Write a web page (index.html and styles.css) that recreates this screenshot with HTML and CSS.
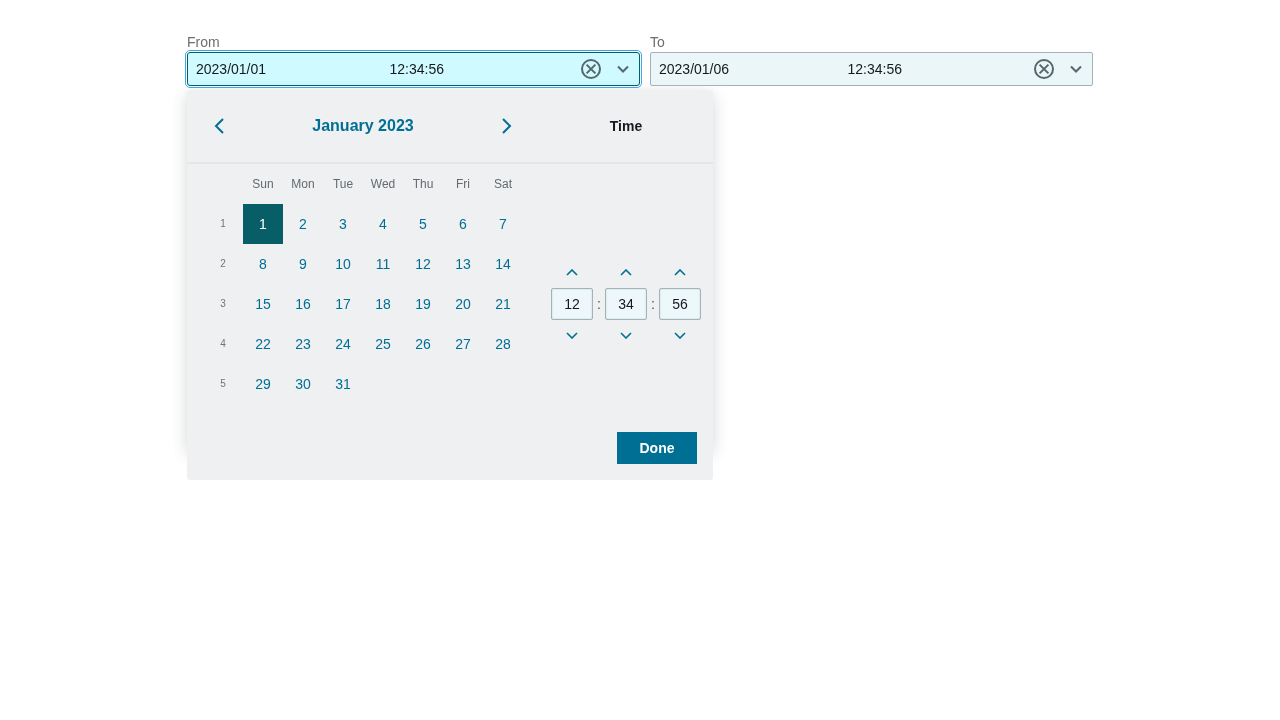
FILE: index.html
```html
<!DOCTYPE html>
<html lang="en">
<head>
    <meta charset="UTF-8">
    <title>Date time range</title>
    <link rel="stylesheet" href="styles.css">
</head>
<body>
    <div class="range">
        <div class="field field-from">
            <label class="field-label">From</label>
            <div class="picker picker-focus">
                <span class="picker-date">2023/01/01</span>
                <span class="picker-time">12:34:56</span>
                <svg class="icon-clear" width="22" height="22" viewBox="0 0 22 22"><circle cx="11" cy="11" r="9"/><path d="M6.6 6.6l8.8 8.8M15.4 6.6l-8.8 8.8"/></svg>
                <svg class="icon-caret" width="14" height="8" viewBox="0 0 14 8"><path d="M2 1.5l5 5 5-5"/></svg>
            </div>

            <div class="sheet">
                <div class="sheet-inner">
                    <div class="sheet-main">
                        <div class="calendar">
                            <div class="cal-head">
                                <svg class="nav" width="12" height="18" viewBox="0 0 12 18"><path d="M10 2L3 9l7 7"/></svg>
                                <span class="cal-month">January 2023</span>
                                <svg class="nav" width="12" height="18" viewBox="0 0 12 18"><path d="M2 2l7 7-7 7"/></svg>
                            </div>
                            <div class="cal-grid">
                                <span></span><span class="dow">Sun</span><span class="dow">Mon</span><span class="dow">Tue</span><span class="dow">Wed</span><span class="dow">Thu</span><span class="dow">Fri</span><span class="dow">Sat</span>
                                <span class="wk">1</span><span class="day day-on">1</span><span class="day">2</span><span class="day">3</span><span class="day">4</span><span class="day">5</span><span class="day">6</span><span class="day">7</span>
                                <span class="wk">2</span><span class="day">8</span><span class="day">9</span><span class="day">10</span><span class="day">11</span><span class="day">12</span><span class="day">13</span><span class="day">14</span>
                                <span class="wk">3</span><span class="day">15</span><span class="day">16</span><span class="day">17</span><span class="day">18</span><span class="day">19</span><span class="day">20</span><span class="day">21</span>
                                <span class="wk">4</span><span class="day">22</span><span class="day">23</span><span class="day">24</span><span class="day">25</span><span class="day">26</span><span class="day">27</span><span class="day">28</span>
                                <span class="wk">5</span><span class="day">29</span><span class="day">30</span><span class="day">31</span>
                            </div>
                        </div>
                        <div class="clock">
                            <div class="clock-head">Time</div>
                            <div class="clock-body">
                                <div class="spin">
                                    <svg class="chev" width="12" height="7" viewBox="0 0 12 7"><path d="M1 6l5-5 5 5"/></svg>
                                    <div class="spin-box">12</div>
                                    <svg class="chev" width="12" height="7" viewBox="0 0 12 7"><path d="M1 1l5 5 5-5"/></svg>
                                </div>
                                <span class="colon">:</span>
                                <div class="spin">
                                    <svg class="chev" width="12" height="7" viewBox="0 0 12 7"><path d="M1 6l5-5 5 5"/></svg>
                                    <div class="spin-box">34</div>
                                    <svg class="chev" width="12" height="7" viewBox="0 0 12 7"><path d="M1 1l5 5 5-5"/></svg>
                                </div>
                                <span class="colon">:</span>
                                <div class="spin">
                                    <svg class="chev" width="12" height="7" viewBox="0 0 12 7"><path d="M1 6l5-5 5 5"/></svg>
                                    <div class="spin-box">56</div>
                                    <svg class="chev" width="12" height="7" viewBox="0 0 12 7"><path d="M1 1l5 5 5-5"/></svg>
                                </div>
                            </div>
                        </div>
                    </div>
                    <div class="sheet-foot">
                        <button class="done">Done</button>
                    </div>
                </div>
            </div>
        </div>

        <div class="field field-to">
            <label class="field-label">To</label>
            <div class="picker">
                <span class="picker-date">2023/01/06</span>
                <span class="picker-time">12:34:56</span>
                <svg class="icon-clear" width="22" height="22" viewBox="0 0 22 22"><circle cx="11" cy="11" r="9"/><path d="M6.6 6.6l8.8 8.8M15.4 6.6l-8.8 8.8"/></svg>
                <svg class="icon-caret" width="14" height="8" viewBox="0 0 14 8"><path d="M2 1.5l5 5 5-5"/></svg>
            </div>
        </div>
    </div>
</body>
</html>
```

FILE: styles.css
```css
html, body {
    height: 100%;
}
body {
    font-family: "Liberation Sans", Arial, sans-serif;
    font-size: 14px;
    margin: 0;
    padding: 34px 187px 0;
    box-sizing: border-box;
    background-color: #fff;
    color: #15191e;
}
svg {
    fill: none;
    display: block;
}
.range {
    display: flex;
    align-items: flex-start;
    gap: 10px;
    will-change: transform;
}
.field-from {
    width: 453px;
}
.field-to {
    width: 443px;
}
.field-label {
    display: block;
    height: 18px;
    line-height: 16px;
    color: #6e6e6e;
}
.picker {
    height: 34px;
    box-sizing: border-box;
    display: flex;
    align-items: center;
    padding: 0 9px 0 8px;
    border: 1px solid #a2b3b9;
    border-radius: 2px;
    background-color: #eaf6f8;
}
.picker-focus {
    border-color: #055f68;
    background-color: #cffaff;
    outline: 1px solid #3aa9ee;
    outline-offset: 1px;
    border-radius: 3px;
}
.picker-date {
    width: 193.5px;
}
.field-to .picker-date {
    width: 188.5px;
}
.icon-clear {
    stroke: #55666c;
    stroke-width: 2;
    margin-left: auto;
    margin-right: 14px;
}
.icon-caret {
    stroke: #55666c;
    stroke-width: 2;
}
.sheet {
    margin-top: 4px;
    width: 526px;
    height: 360px;
    border-radius: 3px;
    box-shadow: 0 4px 16px rgba(40, 50, 60, 0.2);
}
.sheet-inner {
    height: 390px;
    background-color: #eef0f2;
    border-radius: 3px;
}
.sheet-main {
    display: flex;
    height: 342px;
}
.calendar {
    width: 352px;
}
.cal-head {
    height: 72px;
    display: flex;
    align-items: center;
    justify-content: space-between;
    padding-left: 26px;
    width: 300px;
}
.nav {
    stroke: #006f94;
    stroke-width: 2;
}
.cal-month {
    font-size: 16px;
    font-weight: bold;
    color: #006f94;
}
.cal-grid {
    display: grid;
    grid-template-columns: 56px repeat(7, 40px);
    grid-template-rows: 40px repeat(5, 40px);
    border-top: 2px solid #e3e5e8;
    width: 526px;
}
.dow {
    font-size: 12px;
    color: #656a6f;
    text-align: center;
    line-height: 40px;
}
.wk {
    font-size: 10px;
    color: #6f7479;
    text-align: center;
    line-height: 40px;
    padding-left: 16px;
    width: 40px;
}
.day {
    color: #006f94;
    text-align: center;
    line-height: 40px;
}
.day-on {
    background-color: #075e67;
    color: #fff;
}
.clock {
    width: 174px;
}
.clock-head {
    height: 72px;
    line-height: 72px;
    text-align: center;
    font-weight: bold;
}
.clock-body {
    display: flex;
    justify-content: center;
    align-items: center;
    margin-top: 107px;
}
.spin {
    width: 42px;
    display: flex;
    flex-direction: column;
    align-items: center;
    gap: 12px;
}
.spin-box {
    width: 42px;
    height: 32px;
    box-sizing: border-box;
    border: 1px solid #a2b3b9;
    border-radius: 2px;
    background-color: #eef8fa;
    box-shadow: inset 0 0 2px rgba(60, 100, 115, 0.25);
    line-height: 30px;
    text-align: center;
}
.colon {
    width: 12px;
    text-align: center;
    color: #4d5257;
}
.chev {
    stroke: #006f94;
    stroke-width: 1.6;
}
.sheet-foot {
    display: flex;
    justify-content: flex-end;
    padding-right: 16px;
}
.done {
    width: 80px;
    height: 32px;
    border: none;
    background-color: #006f94;
    color: #fff;
    font-family: inherit;
    font-size: 14px;
    font-weight: bold;
}
```
